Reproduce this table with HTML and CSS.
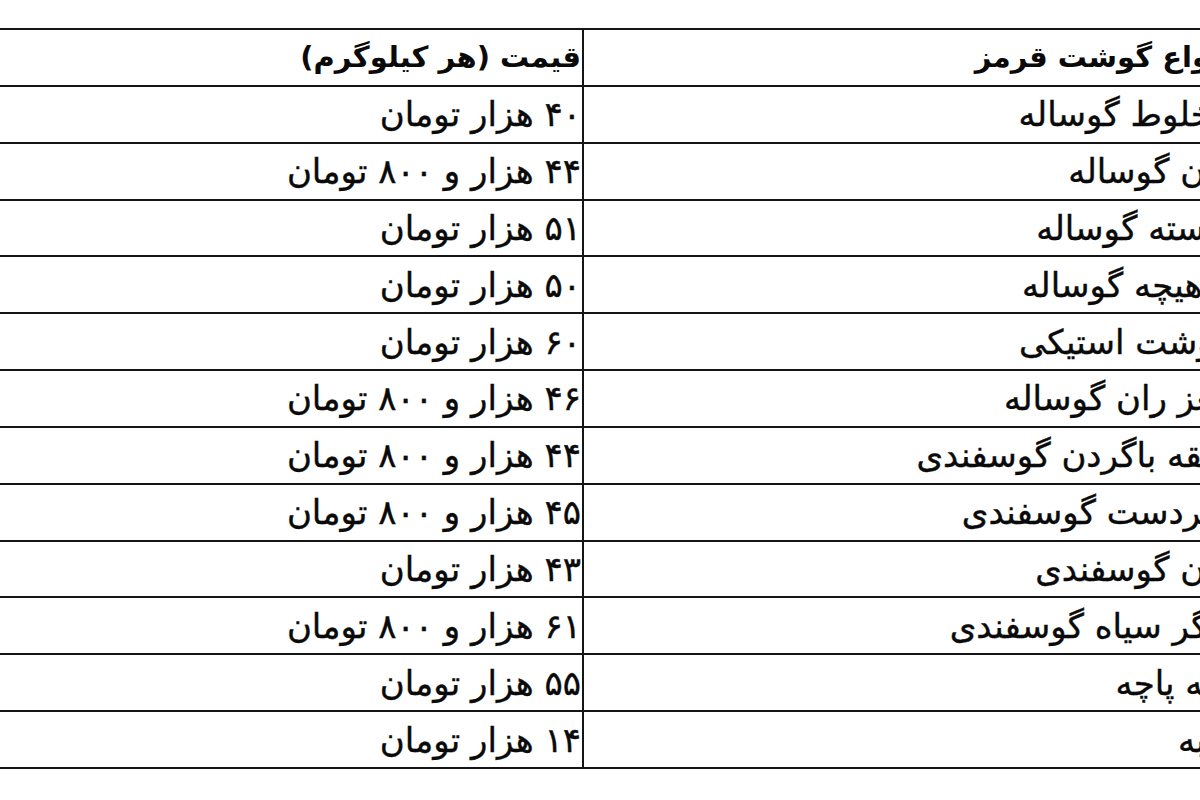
FILE: index.html
```html
<!DOCTYPE html>
<html lang="fa" dir="rtl">
<head>
<meta charset="utf-8">
<title>قیمت گوشت قرمز</title>
<link rel="stylesheet" href="styles.css">
</head>
<body>
<div class="frame">
  <table class="prices">
    <colgroup><col class="col-name"><col class="col-price"></colgroup>
    <thead>
      <tr><th>انواع گوشت قرمز</th><th>قیمت (هر کیلوگرم)</th></tr>
    </thead>
    <tbody>
      <tr><td>مخلوط گوساله</td><td>۴۰ هزار تومان</td></tr>
      <tr><td>ران گوساله</td><td>۴۴ هزار و ۸۰۰ تومان</td></tr>
      <tr><td>راسته گوساله</td><td>۵۱ هزار تومان</td></tr>
      <tr><td>ماهیچه گوساله</td><td>۵۰ هزار تومان</td></tr>
      <tr><td>گوشت استیکی</td><td>۶۰ هزار تومان</td></tr>
      <tr><td>مغز ران گوساله</td><td>۴۶ هزار و ۸۰۰ تومان</td></tr>
      <tr><td>شقه باگردن گوسفندی</td><td>۴۴ هزار و ۸۰۰ تومان</td></tr>
      <tr><td>سردست گوسفندی</td><td>۴۵ هزار و ۸۰۰ تومان</td></tr>
      <tr><td>ران گوسفندی</td><td>۴۳ هزار تومان</td></tr>
      <tr><td>جگر سیاه گوسفندی</td><td>۶۱ هزار و ۸۰۰ تومان</td></tr>
      <tr><td>کله پاچه</td><td>۵۵ هزار تومان</td></tr>
      <tr><td>دنبه</td><td>۱۴ هزار تومان</td></tr>
    </tbody>
  </table>
</div>
</body>
</html>
```

FILE: styles.css
```css
html, body {
  margin: 0;
  padding: 0;
  background: #ffffff;
}

.frame {
  width: 1200px;
  height: 800px;
  overflow: hidden;
  direction: rtl;
  padding-top: 28px;
  box-sizing: border-box;
}

.prices {
  border-collapse: collapse;
  width: 1278px;
  margin-right: -34px;
  table-layout: fixed;
  font-family: "DejaVu Sans", sans-serif;
  color: #0a0a0a;
  font-size: 34px;
}

.col-name { width: 650px; }
.col-price { width: 628px; }

.prices th,
.prices td {
  border: 2px solid #151515;
  height: 54.85px;
  padding: 0 1px;
  text-align: right;
  vertical-align: middle;
  white-space: nowrap;
  line-height: 1;
}

.prices td {
  -webkit-text-stroke: 0.4px #0a0a0a;
}

.prices th {
  font-weight: bold;
  font-size: 29px;
}
```
